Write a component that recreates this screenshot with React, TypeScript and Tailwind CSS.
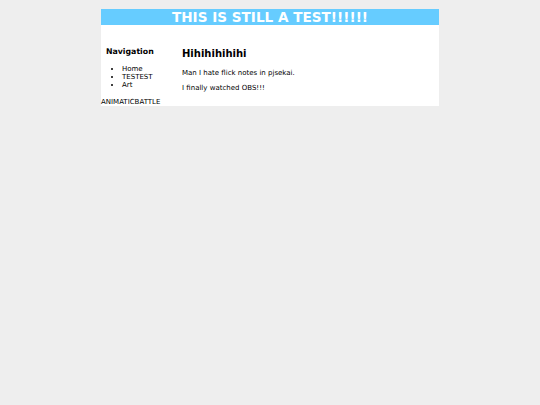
export default function App() {
    return (
        <div className="min-h-screen bg-[#eeeeee] pt-[9px] font-['DejaVu_Sans',sans-serif] text-black">
            <div className="mx-auto w-[338px] bg-white">
                {/* Header */}
                <div className="h-[16px] bg-[#66ccff] text-center text-[13.6px] font-bold leading-[16px] text-white">
                    THIS IS STILL A TEST!!!!!!
                </div>

                <div className="flex">
                    {/* Sidebar */}
                    <div className="w-[81px] shrink-0">
                        <div className="pl-[5px] pt-[22px]">
                            <h2 className="text-[7.8px] font-bold leading-[10px]">Navigation</h2>
                            <ul className="mt-[8px] list-disc pl-[16px] text-[7px] leading-[8px]">
                                <li>Home</li>
                                <li>TESTEST</li>
                                <li>Art</li>
                            </ul>
                        </div>
                        <p className="mt-[9px] text-[7px] leading-[8px]">ANIMATICBATTLE</p>
                    </div>

                    {/* Main */}
                    <div className="flex-1 pt-[23px]">
                        <h1 className="text-[10px] font-bold leading-[12px]">Hihihihihihi</h1>
                        <p className="mt-[8px] text-[7px] leading-[10px]">Man I hate flick notes in pjsekai.</p>
                        <p className="mt-[5px] text-[7px] leading-[10px]">I finally watched OBS!!!</p>
                    </div>
                </div>
            </div>
        </div>
    );
}
